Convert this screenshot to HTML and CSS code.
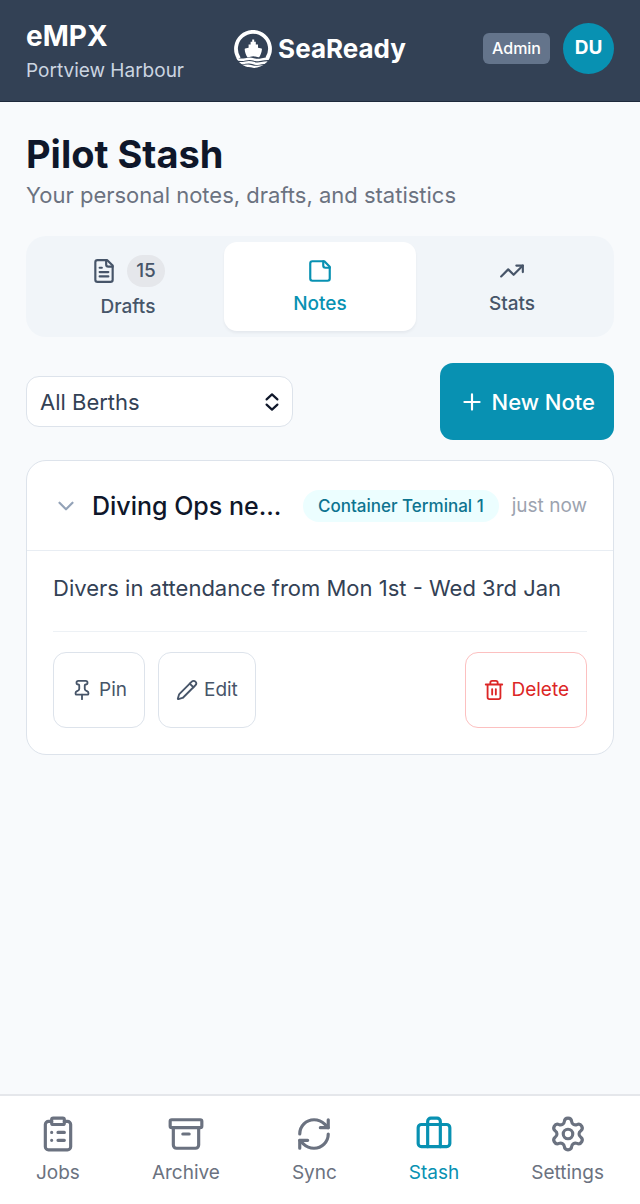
FILE: index.html
```html
<!DOCTYPE html>
<html lang="en">
<head>
<meta charset="utf-8">
<meta name="viewport" content="width=device-width, initial-scale=1">
<title>Pilot Stash</title>
<link rel="stylesheet" href="styles.css">
</head>
<body class="app">
<header class="topbar">
  <div class="port">
    <div class="port-app">eMPX</div>
    <div class="port-name">Portview Harbour</div>
  </div>
  <div class="brand">
    <svg class="brand-mark" viewBox="0 0 38 38" aria-hidden="true">
      <defs><clipPath id="disc"><circle cx="19" cy="19" r="19"/></clipPath></defs>
      <path d="M5 28.500A17 17 0 1 1 33 28.500" fill="none" stroke="#fff" stroke-width="3.800"/>
      <path d="M18.200 9.500h2v2.300h1.600v2.700h2.200v3.200l3.600.8q.4.200.3.900c-.2 2.900-1.300 5.500-2.700 7.800-2.200.3-3.500-.9-5.900-.9s-3.700 1.200-5.900.9c-1.500-2.300-2.500-4.900-2.700-7.800q0-.7.400-.9l3.500-.8v-3.200h2v-2.700h1.600z" fill="#fff"/>
      <g clip-path="url(#disc)" fill="none" stroke="#fff" stroke-width="2.400">
        <path d="M1 28.900c5 1.400 8 1 10.500.4s5-.9 8 0 5 1.100 7.500.4 5-1.300 10-.8"/>
        <path d="M1 32.600c5 1.200 8 .6 10.500 0s5.500-.5 8 .4 5 1 8 .2 5-.9 10-.5"/>
        <path d="M5 36.500c4 0 6-.8 9-.8s4.500 1.200 7.500 1.200 5-.8 10-.8"/>
      </g>
    </svg>
    <span class="brand-name">SeaReady</span>
  </div>
  <div class="account">
    <span class="role">Admin</span>
    <button class="avatar" type="button" aria-label="Account menu">DU</button>
  </div>
</header>

<main class="page">
  <div class="heading">
    <h1 class="title">Pilot Stash</h1>
    <p class="subtitle">Your personal notes, drafts, and statistics</p>
  </div>

  <div class="tabs" role="tablist">
    <button class="tab" type="button" role="tab" aria-selected="false">
      <span class="tab-top">
        <svg class="icon" viewBox="0 0 24 24"><path d="M15 2H6a2 2 0 0 0-2 2v16a2 2 0 0 0 2 2h12a2 2 0 0 0 2-2V7Z"/><path d="M14 2v4a2 2 0 0 0 2 2h4M10 9H8M16 13H8M16 17H8"/></svg>
        <span class="count">15</span>
      </span>
      <span>Drafts</span>
    </button>
    <button class="tab tab-active" type="button" role="tab" aria-selected="true">
      <svg class="icon" viewBox="0 0 24 24"><path d="M16 3H5a2 2 0 0 0-2 2v14a2 2 0 0 0 2 2h14a2 2 0 0 0 2-2V8Z"/><path d="M15 3v4a2 2 0 0 0 2 2h4"/></svg>
      <span>Notes</span>
    </button>
    <button class="tab" type="button" role="tab" aria-selected="false">
      <svg class="icon" viewBox="0 0 24 24"><path d="m22 7-8.500 8.500-5-5L2 17"/><path d="M16 7h6v6"/></svg>
      <span>Stats</span>
    </button>
  </div>

  <div class="toolbar">
    <div class="picker">
      <select class="picker-select" aria-label="Berth">
        <option>All Berths</option>
        <option>Container Terminal 1</option>
      </select>
      <svg class="icon picker-icon" viewBox="0 0 24 24" aria-hidden="true"><path d="m7 9.600 5-4.600 5 4.600M7 14.400l5 4.600 5-4.600"/></svg>
    </div>
    <button class="new-note" type="button">
      <svg class="icon" viewBox="0 0 24 24"><path d="M5 12h14M12 5v14"/></svg>
      New Note
    </button>
  </div>

  <article class="note">
    <button class="note-head" type="button" aria-expanded="true">
      <svg class="icon note-chevron" viewBox="0 0 24 24"><path d="m6 9 6 6 6-6"/></svg>
      <span class="note-title">Diving Ops ne...</span>
      <span class="note-berth">Container Terminal 1</span>
      <span class="note-time">just now</span>
    </button>
    <div class="note-body">
      <p class="note-text">Divers in attendance from Mon 1st - Wed 3rd Jan</p>
      <div class="note-actions">
        <button class="action" type="button">
          <svg class="icon icon-small" viewBox="0 0 24 24"><path d="M12 17v5"/><path d="M9 10.760a2 2 0 0 1-1.110 1.790l-1.780.9A2 2 0 0 0 5 15.240V16a1 1 0 0 0 1 1h12a1 1 0 0 0 1-1v-.76a2 2 0 0 0-1.110-1.790l-1.780-.9A2 2 0 0 1 15 10.760V7a1 1 0 0 1 1-1 2 2 0 0 0 0-4H8a2 2 0 0 0 0 4 1 1 0 0 1 1 1z"/></svg>
          Pin
        </button>
        <button class="action" type="button">
          <svg class="icon icon-small" viewBox="0 0 24 24"><path d="M21.174 6.812a1 1 0 0 0-3.986-3.987L3.842 16.174a2 2 0 0 0-.5.830l-1.321 4.352a.5.5 0 0 0 .623.622l4.353-1.320a2 2 0 0 0 .830-.497z"/><path d="m15 5 4 4"/></svg>
          Edit
        </button>
        <button class="action action-danger" type="button">
          <svg class="icon icon-small" viewBox="0 0 24 24"><path d="M3 6h18M19 6v14c0 1-1 2-2 2H7c-1 0-2-1-2-2V6M8 6V4c0-1 1-2 2-2h4c1 0 2 1 2 2v2M10 11v6M14 11v6"/></svg>
          Delete
        </button>
      </div>
    </div>
  </article>
</main>

<nav class="bottom-nav" aria-label="Main">
  <a class="nav-item" href="#jobs">
    <svg class="icon icon-nav" viewBox="0 0 24 24"><rect width="8" height="4" x="8" y="2" rx="1"/><path d="M16 4h2a2 2 0 0 1 2 2v14a2 2 0 0 1-2 2H6a2 2 0 0 1-2-2V6a2 2 0 0 1 2-2h2M12 11h4M12 16h4M8 11h.01M8 16h.01"/></svg>
    Jobs
  </a>
  <a class="nav-item" href="#archive">
    <svg class="icon icon-nav" viewBox="0 0 24 24"><rect width="20" height="5" x="2" y="3" rx="1"/><path d="M4 8v11a2 2 0 0 0 2 2h12a2 2 0 0 0 2-2V8M10 12h4"/></svg>
    Archive
  </a>
  <a class="nav-item" href="#sync">
    <svg class="icon icon-nav" viewBox="0 0 24 24"><path d="M3 12a9 9 0 0 1 9-9 9.750 9.750 0 0 1 6.740 2.740L21 8"/><path d="M21 3v5h-5M21 12a9 9 0 0 1-9 9 9.750 9.750 0 0 1-6.740-2.740L3 16"/><path d="M8 16H3v5"/></svg>
    Sync
  </a>
  <a class="nav-item nav-active" href="#stash" aria-current="page">
    <svg class="icon icon-nav" viewBox="0 0 24 24"><path d="M16 20V4a2 2 0 0 0-2-2h-4a2 2 0 0 0-2 2v16"/><rect width="20" height="14" x="2" y="6" rx="2"/></svg>
    Stash
  </a>
  <a class="nav-item" href="#settings">
    <svg class="icon icon-nav" viewBox="0 0 24 24"><path d="M9.671 4.136a2.340 2.340 0 0 1 4.659 0 2.340 2.340 0 0 0 3.319 1.915 2.340 2.340 0 0 1 2.330 4.033 2.340 2.340 0 0 0 0 3.831 2.340 2.340 0 0 1-2.330 4.033 2.340 2.340 0 0 0-3.319 1.915 2.340 2.340 0 0 1-4.659 0 2.340 2.340 0 0 0-3.320-1.915 2.340 2.340 0 0 1-2.330-4.033 2.340 2.340 0 0 0 0-3.831A2.340 2.340 0 0 1 6.350 6.051a2.340 2.340 0 0 0 3.319-1.915"/><circle cx="12" cy="12" r="3"/></svg>
    Settings
  </a>
</nav>
</body>
</html>
```
FILE: styles.css
```css
*,
*::before,
*::after {
  box-sizing: border-box;
}

.app {
  display: flex;
  flex-direction: column;
  min-height: 100vh;
  margin: 0;
  background: #f8fafc;
  color: #0f172a;
  font-family: Inter, "Liberation Sans", sans-serif;
  font-size: 19px;
  line-height: 26px;
}

button,
select {
  margin: 0;
  font: inherit;
  color: inherit;
  cursor: pointer;
}

.icon {
  flex: none;
  width: 26px;
  height: 26px;
  fill: none;
  stroke: currentColor;
  stroke-width: 2;
  stroke-linecap: round;
  stroke-linejoin: round;
}

.icon-small {
  width: 22px;
  height: 22px;
}

.icon-nav {
  width: 38px;
  height: 38px;
}

/* Top bar */
.topbar {
  display: grid;
  grid-template-columns: 1fr auto 1fr;
  align-items: center;
  min-height: 102px;
  padding: 0 26px;
  background: #334155;
  border-bottom: 1px solid #1e293b;
  color: #fff;
}

.port-app {
  font-size: 28px;
  font-weight: 700;
  line-height: 36px;
}

.port-name {
  margin-top: 4px;
  color: #cbd5e1;
  line-height: 26px;
}

.brand {
  display: flex;
  align-items: center;
  gap: 6px;
  padding-bottom: 4px;
}

.brand-mark {
  width: 38px;
  height: 38px;
}

.brand-name {
  font-size: 26px;
  font-weight: 700;
  line-height: 32px;
}

.account {
  display: flex;
  align-items: center;
  justify-content: flex-end;
  gap: 13px;
  padding-bottom: 5px;
}

.role {
  padding: 4px 9px;
  border-radius: 6px;
  background: #64748b;
  font-size: 16px;
  font-weight: 500;
  line-height: 23px;
}

.avatar {
  width: 51px;
  height: 51px;
  padding: 0;
  border: 0;
  border-radius: 50%;
  background: #0891b2;
  color: #fff;
  font-weight: 700;
}

/* Page */
.page {
  flex: 1;
  padding: 32px 26px;
}

.title {
  margin: 0;
  font-size: 38px;
  font-weight: 700;
  line-height: 40px;
}

.subtitle {
  margin: 6px 0 0;
  color: #6b7280;
  font-size: 22px;
  line-height: 30px;
}

.tabs {
  display: grid;
  grid-template-columns: repeat(3, 1fr);
  margin-top: 26px;
  padding: 6px;
  border-radius: 20px;
  background: #f1f5f9;
}

.tab {
  display: flex;
  flex-direction: column;
  align-items: center;
  justify-content: center;
  gap: 7px;
  padding: 13px 12px 11px;
  border: 0;
  border-radius: 13px;
  background: transparent;
  color: #475569;
  font-weight: 500;
}

.tab-active {
  background: #fff;
  color: #0891b2;
  box-shadow: 0 2px 3px rgba(15, 23, 42, 0.05);
}

.tab-top {
  display: flex;
  align-items: center;
  gap: 10px;
}

.count {
  padding: 3px 9px;
  border-radius: 16px;
  background: #e5e7eb;
}

.toolbar {
  display: flex;
  align-items: center;
  justify-content: space-between;
  margin-top: 26px;
}

.picker {
  position: relative;
  width: 267px;
}

.picker-select {
  width: 100%;
  height: 51px;
  padding: 0 40px 0 13px;
  border: 1px solid #dde3eb;
  border-radius: 13px;
  background: #fff;
  color: #334155;
  font-size: 22px;
  appearance: none;
}

.picker-icon {
  position: absolute;
  top: 13px;
  right: 8px;
  color: #0f172a;
  pointer-events: none;
}

.new-note {
  display: flex;
  align-items: center;
  gap: 7px;
  height: 77px;
  padding: 0 19px;
  border: 0;
  border-radius: 13px;
  background: #0891b2;
  color: #fff;
  font-size: 22px;
  font-weight: 500;
}

/* Note card */
.note {
  margin-top: 20px;
  overflow: hidden;
  border: 1px solid #dde3eb;
  border-radius: 20px;
  background: #fff;
}

.note-head {
  display: flex;
  align-items: center;
  gap: 13px;
  width: 100%;
  padding: 29px 26px 28px;
  border: 0;
  border-bottom: 1px solid #e8edf3;
  background: transparent;
  text-align: left;
}

.note-chevron {
  color: #94a3b8;
}

.note-title {
  flex: 1;
  min-width: 0;
  overflow: hidden;
  font-size: 25px;
  font-weight: 500;
  line-height: 32px;
  text-overflow: ellipsis;
  white-space: nowrap;
}

.note-berth {
  padding: 3px 15px;
  border-radius: 16px;
  background: #ecfeff;
  color: #0e7490;
  font-size: 17px;
  font-weight: 500;
  white-space: nowrap;
}

.note-time {
  color: #9ca3af;
  white-space: nowrap;
}

.note-body {
  padding: 19px 26px 26px;
}

.note-text {
  margin: 0;
  color: #334155;
  font-size: 22px;
  line-height: 36px;
}

.note-actions {
  display: flex;
  gap: 13px;
  margin-top: 25px;
  padding-top: 20px;
  border-top: 1px solid #edf1f5;
}

.action {
  display: flex;
  align-items: center;
  gap: 6px;
  height: 76px;
  padding: 0 17px;
  border: 1px solid #dde3eb;
  border-radius: 13px;
  background: #fff;
  color: #475569;
}

.action-danger {
  margin-left: auto;
  border-color: #fcc0c0;
  color: #dc2626;
}

/* Bottom navigation */
.bottom-nav {
  display: flex;
  justify-content: space-around;
  padding: 19px 0 18px;
  border-top: 2px solid #e5e7eb;
  background: #fff;
}

.nav-item {
  display: flex;
  flex-direction: column;
  align-items: center;
  gap: 7px;
  color: #6b7280;
  text-decoration: none;
}

.nav-active {
  color: #0891b2;
}
```
